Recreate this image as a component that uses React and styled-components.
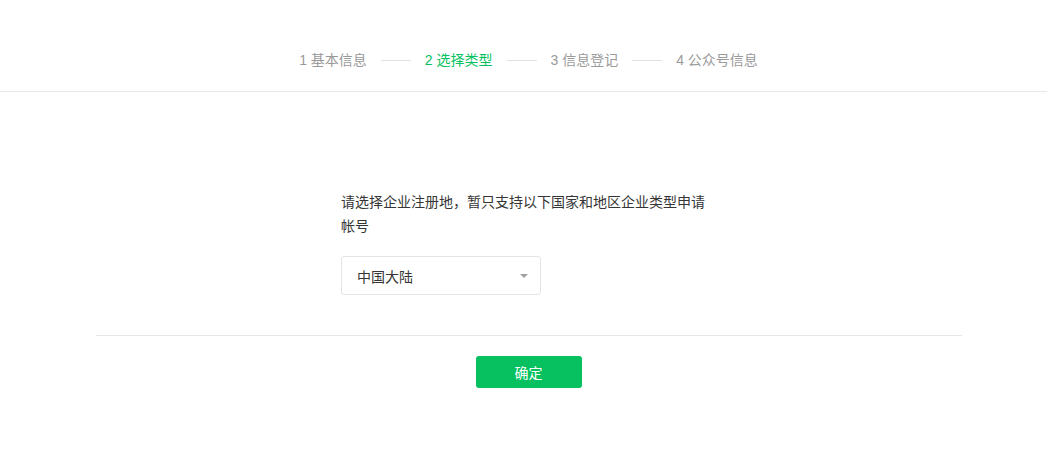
import React from 'react';
import styled, { createGlobalStyle } from 'styled-components';

const GlobalStyle = createGlobalStyle`
  html, body {
    margin: 0;
    padding: 0;
    background: #fff;
    font-family: "Liberation Sans", "Noto Sans CJK SC", sans-serif;
    font-size: 14px;
    color: #353535;
  }
`;

const Header = styled.div`
  height: 91px;
  border-bottom: 1px solid #e7e7eb;
  display: flex;
  justify-content: center;
  padding-left: 10px;
  box-sizing: content-box;
`;

const Steps = styled.div`
  display: flex;
  align-items: center;
  gap: 14px;
  padding-top: 49px;
  height: 22px;
`;

const Step = styled.span`
  font-size: 14px;
  line-height: 22px;
  color: ${(p) => (p.$active ? '#07c160' : '#9a9a9a')};
`;

const StepLine = styled.span`
  width: 30px;
  height: 1px;
  background: #e1e1e4;
`;

const Main = styled.div`
  display: flex;
  flex-direction: column;
  align-items: center;
  padding-left: 10px;
`;

const Form = styled.div`
  width: 375px;
  padding-top: 98px;
`;

const Tip = styled.p`
  margin: 0;
  font-size: 14px;
  line-height: 24px;
  color: #353535;
`;

const Select = styled.div`
  margin-top: 18px;
  width: 200px;
  height: 39px;
  box-sizing: border-box;
  border: 1px solid #e4e4e6;
  border-radius: 3px;
  display: flex;
  align-items: center;
  justify-content: space-between;
  padding: 0 12px 0 15px;
  font-size: 14px;
  color: #353535;
`;

const Arrow = styled.span`
  width: 0;
  height: 0;
  border-left: 4px solid transparent;
  border-right: 4px solid transparent;
  border-top: 4px solid #a0a0a0;
`;

const Footer = styled.div`
  margin-top: 40px;
  width: 866px;
  border-top: 1px solid #e7e7eb;
  display: flex;
  justify-content: center;
  padding-top: 20px;
`;

const Button = styled.button`
  width: 106px;
  height: 32px;
  border: none;
  border-radius: 3px;
  background: #07c160;
  color: #fff;
  font-family: inherit;
  font-size: 14px;
  cursor: pointer;
`;

const steps = ['1 基本信息', '2 选择类型', '3 信息登记', '4 公众号信息'];

export default function App() {
  return (
    <>
      <GlobalStyle />
      <Header>
        <Steps>
          {steps.map((s, i) => (
            <React.Fragment key={s}>
              {i > 0 && <StepLine />}
              <Step $active={i === 1}>{s}</Step>
            </React.Fragment>
          ))}
        </Steps>
      </Header>
      <Main>
        <Form>
          <Tip>请选择企业注册地，暂只支持以下国家和地区企业类型申请帐号</Tip>
          <Select>
            <span>中国大陆</span>
            <Arrow />
          </Select>
        </Form>
        <Footer>
          <Button>确定</Button>
        </Footer>
      </Main>
    </>
  );
}
